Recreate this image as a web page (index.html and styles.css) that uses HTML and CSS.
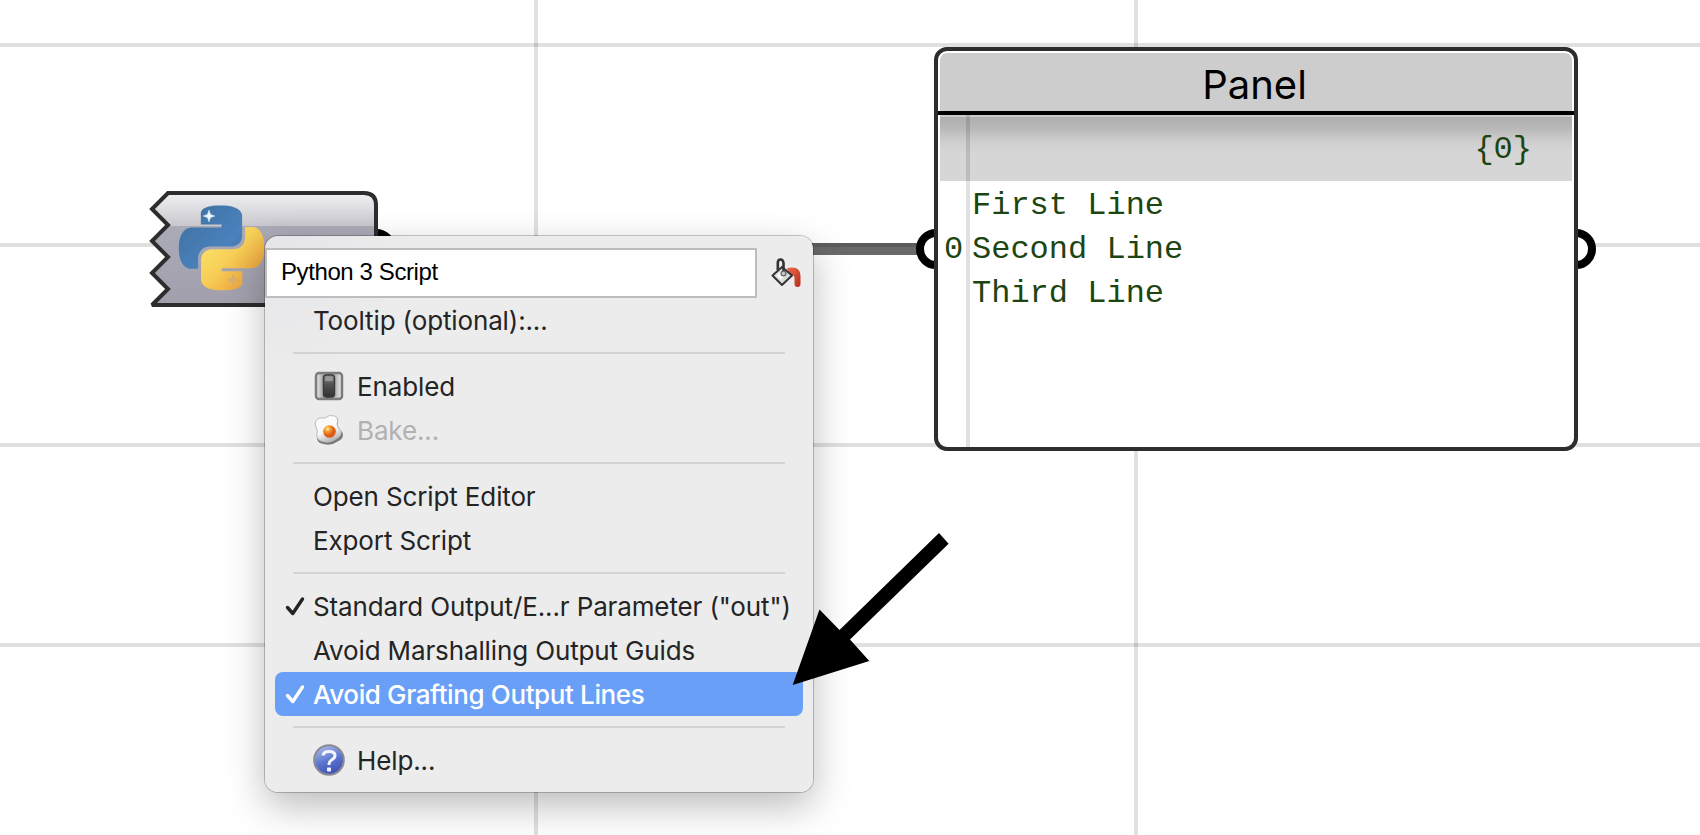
FILE: index.html
```html
<!DOCTYPE html>
<html lang="en">
<head>
<meta charset="utf-8">
<title>Python 3 Script</title>
<link rel="stylesheet" href="styles.css">
</head>
<body>
<main class="canvas">
  <svg class="component" width="270" height="130" viewBox="145 185 270 130">
    <defs>
      <linearGradient id="shell" gradientUnits="userSpaceOnUse" x1="0" y1="193" x2="0" y2="305">
        <stop offset="0" stop-color="#f1f1f4"/><stop offset=".295" stop-color="#c7c7cd"/>
        <stop offset=".295" stop-color="#abaab7"/><stop offset="1" stop-color="#a09fab"/>
      </linearGradient>
      <linearGradient id="blue" x1="0" y1="0" x2="1" y2="1"><stop offset="0" stop-color="#3d6f9f"/><stop offset=".7" stop-color="#4b82bd"/><stop offset="1" stop-color="#3d6d9f"/></linearGradient>
      <linearGradient id="yellow" x1=".1" y1=".2" x2=".8" y2=".9"><stop offset="0" stop-color="#fae06a"/><stop offset=".45" stop-color="#f7cf56"/><stop offset="1" stop-color="#eda03e"/></linearGradient>
    </defs>
    <circle cx="376" cy="249" r="16" fill="#fff" stroke="#000" stroke-width="8"/>
    <path d="M168 193H364Q376 193 376 205V305H152L168 289 152 273 168 257 152 241 168 225 152 209Z" fill="url(#shell)" stroke="#2d2d2d" stroke-width="4" stroke-miterlimit="2"/>
    <g class="logo">
      <g transform="translate(179 205.4) scale(3.54)">
        <path fill="url(#blue)" d="M14.25.18l.9.2.73.26.59.3.45.32.34.34.25.34.16.33.1.3.04.26.02.2-.01.13V8.5l-.05.63-.13.55-.21.46-.26.38-.3.31-.33.25-.35.19-.35.14-.33.1-.3.07-.26.04-.21.02H8.77l-.69.05-.59.14-.5.22-.41.27-.33.32-.27.35-.2.36-.15.37-.1.35-.07.32-.04.27-.02.21v3.06H3.17l-.21-.03-.28-.07-.32-.12-.35-.18-.36-.26-.36-.36-.35-.46-.32-.59-.28-.73-.21-.88-.14-1.05-.05-1.23.06-1.22.16-1.04.24-.87.32-.71.36-.57.4-.44.42-.33.42-.24.4-.16.36-.1.32-.05.24-.01h.16l.06.01h8.16v-.83H6.18l-.01-2.75-.02-.37.05-.34.11-.31.17-.28.25-.26.31-.23.38-.2.44-.18.51-.15.58-.12.64-.1.71-.06.77-.04.84-.02 1.27.05z"/>
        <path fill="url(#yellow)" d="M21.1 6.11l.28.06.32.12.35.18.36.27.36.35.35.47.32.59.28.73.21.88.14 1.04.05 1.23-.06 1.23-.16 1.04-.24.86-.32.71-.36.57-.4.45-.42.33-.42.24-.4.16-.36.09-.32.05-.24.02-.16-.01h-8.22v.82h5.84l.01 2.76.02.36-.05.34-.11.31-.17.29-.25.25-.31.24-.38.2-.44.17-.51.15-.58.13-.64.09-.71.07-.77.04-.84.01-1.27-.04-1.07-.14-.9-.2-.73-.25-.59-.3-.45-.33-.34-.34-.25-.34-.16-.33-.1-.3-.04-.25-.02-.2.01-.13v-5.34l.05-.64.13-.54.21-.46.26-.38.3-.32.33-.24.35-.2.35-.14.33-.1.3-.06.26-.04.21-.02.13-.01h5.84l.69-.05.59-.14.5-.21.41-.28.33-.32.27-.35.2-.36.15-.36.1-.35.07-.32.04-.28.02-.21V6.07h2.09l.14.01z"/>
      </g>
      <path d="M209 210l1.600 4.400 4.400 1.600-4.400 1.600-1.600 4.400-1.600-4.400-4.400-1.600 4.400-1.600z" fill="#f0f7fc" stroke="#cfe2f2" stroke-opacity=".5"/>
      <path d="M233 275l1.500 3.500 3.500 1.500-3.500 1.500-1.500 3.500-1.500-3.500-3.500-1.500 3.500-1.500z" fill="#dcae70" stroke="#dcae70"/>
    </g>
  </svg>

  <div class="wire"></div>
  <div class="grip grip-in"></div>
  <div class="grip grip-out"></div>
  <section class="panel">
    <h1 class="panel-title">Panel</h1>
    <div class="panel-path">{0}</div>
    <div class="panel-data">
      <span class="index">0</span>
      <div class="value">First Line<br>Second Line<br>Third Line</div>
    </div>
    <div class="gutter"></div>
  </section>

  <nav class="menu">
    <div class="name-row">
      <div class="name-field">Python 3 Script</div>
      <svg class="bucket" width="30" height="30" viewBox="0 0 30 30">
        <defs><linearGradient id="paint" x1="0" y1="0" x2="1" y2="1"><stop offset="0" stop-color="#ef6a48"/><stop offset="1" stop-color="#b5301f"/></linearGradient></defs>
        <path d="M16 10C25 8 29.500 11 29.500 18V26Q29.500 29 26.500 29T23.500 26V20Q23 16 18 17Z" fill="url(#paint)"/>
        <path d="M11 9L21 17.500 11 27 1.500 17.500Z" fill="#dcdcdc" stroke="#343434" stroke-width="2" stroke-linejoin="round"/>
        <path d="M5 17.500L11 12 15 16 10 22Z" fill="#fafafa"/>
        <path d="M6.800 12V5Q6.800 1.500 9.500 1.500T12.500 5V14" fill="none" stroke="#343434" stroke-width="2.600"/>
        <circle cx="12.500" cy="15.500" r="2.400" fill="#ccc" stroke="#666" stroke-width="1.300"/>
      </svg>
    </div>
    <div class="item"><span>Tooltip (optional):...</span></div>
    <div class="separator"></div>
    <div class="item with-icon">
      <svg class="icon" width="32" height="32" viewBox="0 0 32 32">
        <defs><linearGradient id="switch" x1="0" y1="0" x2="0" y2="1"><stop offset="0" stop-color="#999"/><stop offset=".4" stop-color="#555"/><stop offset="1" stop-color="#303030"/></linearGradient>
        <linearGradient id="plate"><stop offset="0" stop-color="#ededed"/><stop offset=".25" stop-color="#aaa"/><stop offset=".5" stop-color="#777"/><stop offset=".75" stop-color="#b5b5b5"/><stop offset="1" stop-color="#eee"/></linearGradient></defs>
        <rect x="3" y="3" width="26" height="26" rx="3" fill="url(#plate)" stroke="#7c7c7c" stroke-width="2.500"/>
        <rect x="10.500" y="5" width="11" height="22" rx="3" fill="url(#switch)" stroke="#3c3c3c" stroke-width="1.500"/>
        <rect x="12.500" y="7" width="7" height="4" fill="#999"/>
      </svg>
      <span>Enabled</span></div>
    <div class="item with-icon disabled">
      <svg class="icon" width="32" height="32" viewBox="0 0 32 32">
        <defs><radialGradient id="yolk" cx=".35" cy=".3"><stop offset="0" stop-color="#fff0a8"/><stop offset=".4" stop-color="#f6a637"/><stop offset="1" stop-color="#dd5b17"/></radialGradient>
        <linearGradient id="white" x1=".3" y1="0" x2=".7" y2="1"><stop offset=".55" stop-color="#fafafa"/><stop offset="1" stop-color="#aaa"/></linearGradient></defs>
        <path d="M3 7Q5 3 12 4 16 0 22 2 26 4 24 10 24 13 29 18 31 24 24 27 17 32 8 29 2 27 4 20 5 17 3 13 1 10 3 7Z" transform="translate(.5 .5)" fill="#777"/>
        <path d="M3 7Q5 3 12 4 16 0 22 2 26 4 24 10 24 13 28 17 29 22 23 25 17 30 8 27 3 25 4 20 5 17 3 13 1 10 3 7Z" fill="url(#white)" stroke="#bbb"/>
        <circle cx="16.500" cy="17.500" r="6.300" fill="url(#yolk)"/>
      </svg>
      <span>Bake...</span></div>
    <div class="separator"></div>
    <div class="item"><span>Open Script Editor</span></div>
    <div class="item"><span>Export Script</span></div>
    <div class="separator"></div>
    <div class="item checked"><svg class="check" width="20" height="20" viewBox="0 0 20 20"><path d="M2.500 11.500L7.800 17.500 17.500 3"/></svg><span>Standard Output/E...r Parameter ("out")</span></div>
    <div class="item"><span>Avoid Marshalling Output Guids</span></div>
    <div class="item checked selected"><svg class="check" width="20" height="20" viewBox="0 0 20 20"><path d="M2.500 11.500L7.800 17.500 17.500 3"/></svg><span>Avoid Grafting Output Lines</span></div>
    <div class="separator"></div>
    <div class="item with-icon">
      <svg class="icon" width="32" height="32" viewBox="0 0 32 32">
        <defs><linearGradient id="help" x1=".3" y1="0" x2=".7" y2="1"><stop offset="0" stop-color="#a9b9e8"/><stop offset=".5" stop-color="#5c76cf"/><stop offset="1" stop-color="#3d4db5"/></linearGradient></defs>
        <circle cx="16" cy="16" r="14.800" fill="url(#help)" stroke="#8a8a92" stroke-width="2"/>
        <path d="M10 11.500Q10.500 7.500 16 7.500 22 7.500 22 11.500 22 14 18.500 16 16 17.500 16 21" fill="none" stroke="#f2f5ff" stroke-width="3"/>
        <rect x="14" y="23.500" width="4" height="4" rx="1" fill="#f2f5ff"/>
      </svg>
      <span>Help...</span></div>
  </nav>

  <svg class="arrow" width="160" height="156" viewBox="791 531 160 156">
    <path d="M939 533L948.600 543.700 850 639.500 869.300 661 792.700 685 819.500 609.500 839.500 630Z"/>
  </svg>
</main>
</body>
</html>
```
FILE: styles.css
```css
* { box-sizing: border-box; }
body { margin: 0; }

.canvas {
  position: relative;
  width: 1700px;
  height: 835px;
  overflow: hidden;
  background-color: #fff;
  background-image:
    linear-gradient(rgba(0, 0, 0, .12) 4px, transparent 4px),
    linear-gradient(90deg, rgba(0, 0, 0, .12) 4px, transparent 4px);
  background-size: 100% 200px, 600px 100%;
  background-position: 0 43px, 534px 0;
}

.component { position: absolute; left: 145px; top: 185px; }
.logo { filter: blur(.7px); }

.wire {
  position: absolute;
  left: 700px;
  top: 243px;
  width: 222px;
  height: 12px;
  background: linear-gradient(#5c5c5c 4px, #696969 4px);
}

.grip {
  position: absolute;
  top: 229px;
  width: 40px;
  height: 40px;
  border: 8px solid #000;
  border-radius: 50%;
  background: #fff;
}
.grip-in { left: 916px; }
.grip-out { left: 1556px; }

.panel {
  position: absolute;
  left: 934px;
  top: 47px;
  width: 644px;
  height: 404px;
  border: 4px solid #2d2d2d;
  border-radius: 13px;
  background: #fff;
}
.panel-title {
  height: 58px;
  margin: 2px 2px 0;
  padding: 4px 3px 0 0;
  border-radius: 7px 7px 0 0;
  background: #cdcdcd;
  color: #000;
  font: 400 40px/56px Inter, "Liberation Sans", sans-serif;
  text-align: center;
}
.panel-path {
  height: 70px;
  padding: 5px 42px 0 0;
  border-top: 4px solid #000;
  background: linear-gradient(#c9c9c9 2px, #afafaf 2px, #b6b6b6 12px, #cecece 26px, #d6d6d6 40px) 2px 0 / calc(100% - 4px) 100% no-repeat;
  color: #1c4511;
  font: 32px/60px "Liberation Mono", monospace;
  text-align: right;
}
.panel-data {
  display: flex;
  align-items: center;
  padding-top: 3px;
  color: #1c4511;
  font: 32px/44px "Liberation Mono", monospace;
}
.index { width: 34px; padding-left: 6px; }
.gutter {
  position: absolute;
  left: 28px;
  top: 64px;
  width: 4px;
  height: 332px;
  background: rgba(0, 0, 0, .12);
}

.menu {
  position: absolute;
  left: 265px;
  top: 236px;
  width: 548px;
  height: 556px;
  padding-top: 12px;
  border-radius: 13px;
  background: radial-gradient(circle at 0 0, #e5e5ea, #ececec 150px);
  box-shadow: 0 0 0 1px rgba(0, 0, 0, .22), 0 14px 38px rgba(0, 0, 0, .27);
  color: #242424;
  font: 26px/44px Inter, "Liberation Sans", sans-serif;
  letter-spacing: -.13px;
  white-space: nowrap;
}
.name-row { display: flex; align-items: center; height: 50px; }
.name-field {
  width: 492px;
  height: 50px;
  padding-left: 14px;
  border: 2px solid #bdbdbd;
  background: #fff;
  color: #000;
  font: 24px/43px "Liberation Sans", sans-serif;
  letter-spacing: -.4px;
}
.bucket { margin-left: 14px; }
.item {
  display: flex;
  align-items: center;
  height: 44px;
  margin: 0 10px;
  padding-left: 38px;
}
.item span { padding-top: 2px; }
.icon { margin-right: 12px; }
.disabled { color: #b1b1b1; }
.checked { padding-left: 10px; }
.check { margin-right: 8px; }
.check path {
  fill: none;
  stroke: currentColor;
  stroke-width: 3.4;
  stroke-linecap: round;
  stroke-linejoin: round;
}
.selected {
  border-radius: 8px;
  background: #6a9ff8;
  color: #fff;
  font-weight: 500;
  letter-spacing: -.38px;
}
.separator {
  height: 22px;
  margin: 0 28px;
  border: solid transparent;
  border-width: 10px 0;
  background: #d2d2d2 padding-box;
}

.arrow { position: absolute; left: 791px; top: 531px; }
```
